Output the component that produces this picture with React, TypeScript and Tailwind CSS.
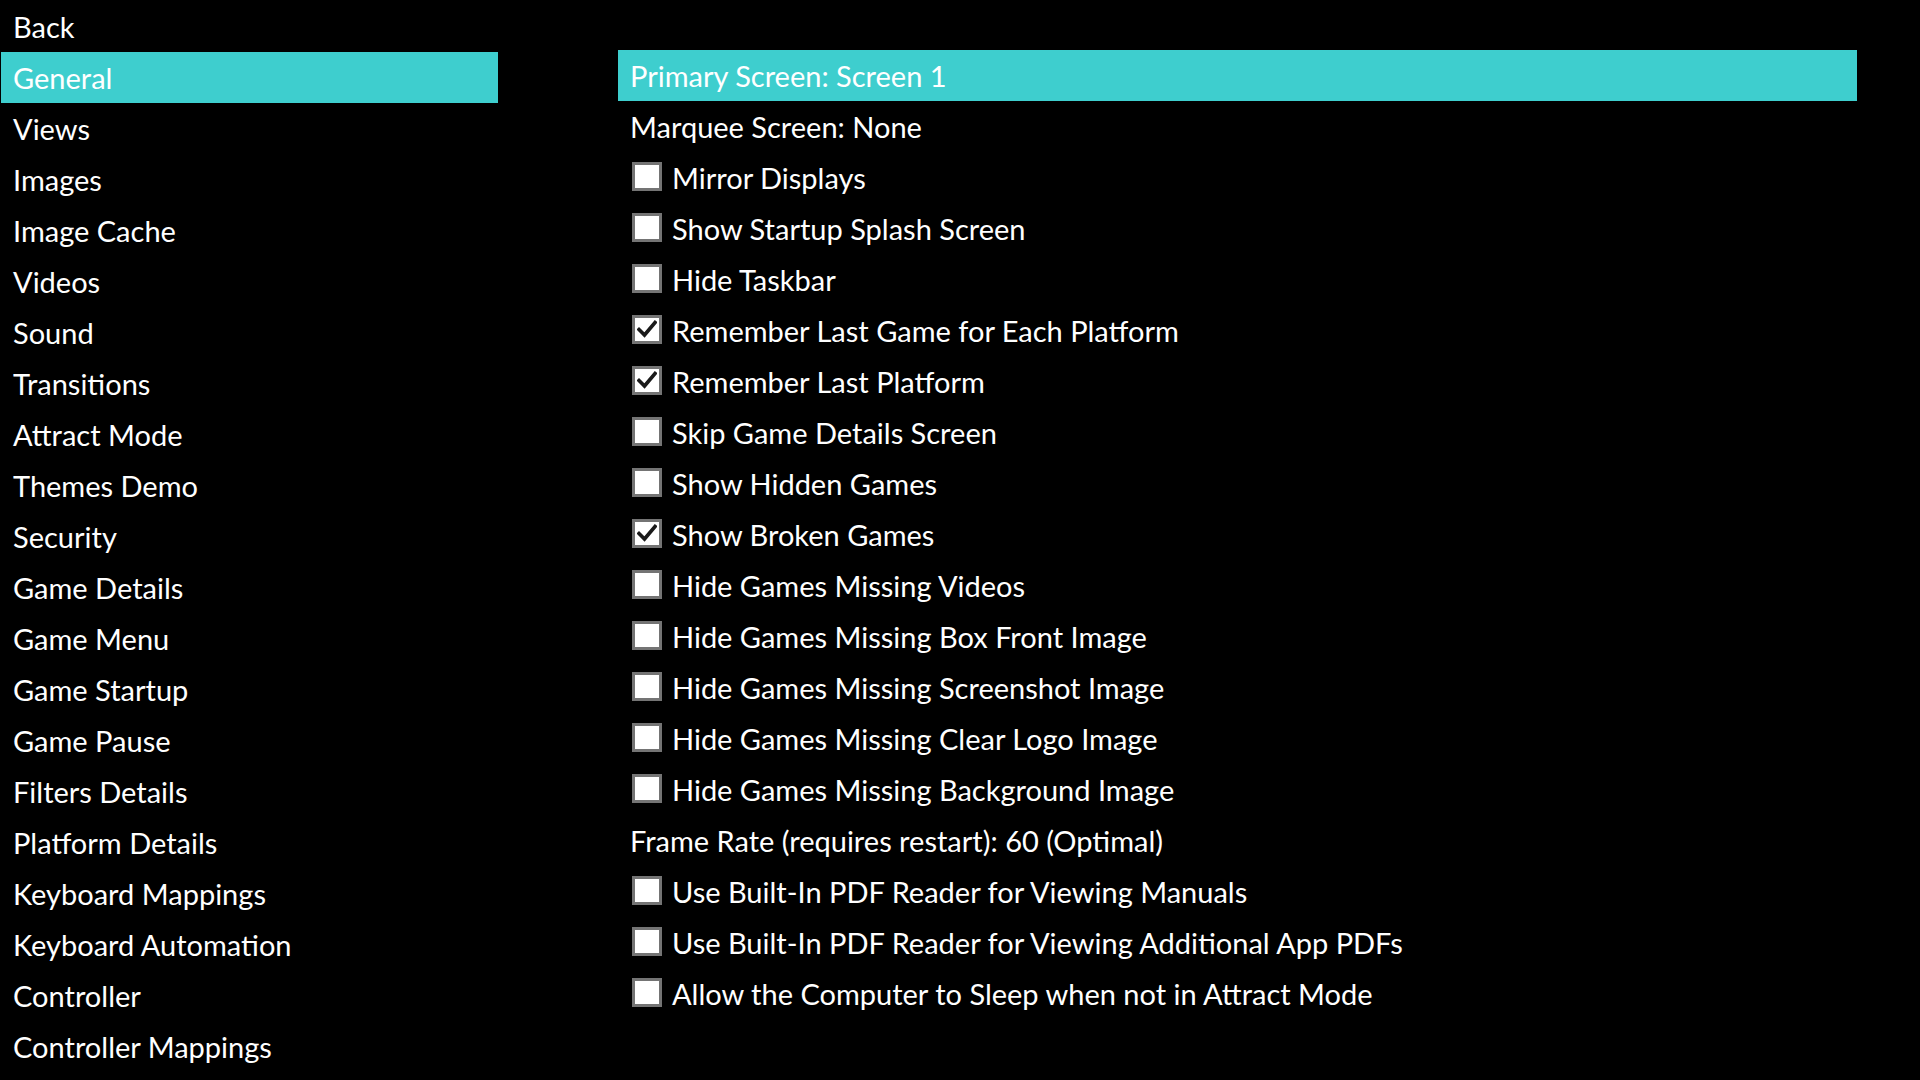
const navItems = [
  'Back',
  'General',
  'Views',
  'Images',
  'Image Cache',
  'Videos',
  'Sound',
  'Transitions',
  'Attract Mode',
  'Themes Demo',
  'Security',
  'Game Details',
  'Game Menu',
  'Game Startup',
  'Game Pause',
  'Filters Details',
  'Platform Details',
  'Keyboard Mappings',
  'Keyboard Automation',
  'Controller',
  'Controller Mappings',
];

type Setting = { label: string; checked?: boolean; kind: 'text' | 'check'; selected?: boolean };

const settings: Setting[] = [
  { label: 'Primary Screen: Screen 1', kind: 'text', selected: true },
  { label: 'Marquee Screen: None', kind: 'text' },
  { label: 'Mirror Displays', kind: 'check' },
  { label: 'Show Startup Splash Screen', kind: 'check' },
  { label: 'Hide Taskbar', kind: 'check' },
  { label: 'Remember Last Game for Each Platform', kind: 'check', checked: true },
  { label: 'Remember Last Platform', kind: 'check', checked: true },
  { label: 'Skip Game Details Screen', kind: 'check' },
  { label: 'Show Hidden Games', kind: 'check' },
  { label: 'Show Broken Games', kind: 'check', checked: true },
  { label: 'Hide Games Missing Videos', kind: 'check' },
  { label: 'Hide Games Missing Box Front Image', kind: 'check' },
  { label: 'Hide Games Missing Screenshot Image', kind: 'check' },
  { label: 'Hide Games Missing Clear Logo Image', kind: 'check' },
  { label: 'Hide Games Missing Background Image', kind: 'check' },
  { label: 'Frame Rate (requires restart): 60 (Optimal)', kind: 'text' },
  { label: 'Use Built-In PDF Reader for Viewing Manuals', kind: 'check' },
  { label: 'Use Built-In PDF Reader for Viewing Additional App PDFs', kind: 'check' },
  { label: 'Allow the Computer to Sleep when not in Attract Mode', kind: 'check' },
];

function CheckBox({ checked }: { checked?: boolean }) {
  return (
    <div className="w-[30px] h-[29px] mb-[3px] bg-white border-[3px] border-[#747474] flex items-center justify-center shrink-0">
      {checked && (
        <svg width="20" height="20" viewBox="0 0 20 20">
          <path d="M2 10.5 L7.5 16 L18 3.5" fill="none" stroke="#1a1a1a" strokeWidth="3.6" strokeLinecap="square" />
        </svg>
      )}
    </div>
  );
}

export default function App() {
  return (
    <div
      className="w-[1920px] h-[1080px] bg-black text-white flex overflow-hidden text-[29px]"
      style={{ fontFamily: 'Lato, "Open Sans", sans-serif' }}
    >
      {/* menu */}
      <div className="w-[497px] ml-[1px] pt-[1px] flex flex-col">
        {navItems.map((item) => (
          <div
            key={item}
            className={`h-[51px] flex items-center pl-[12px] ${item === 'General' ? 'bg-[#3ecece]' : ''}`}
          >
            {item}
          </div>
        ))}
      </div>

      {/* settings */}
      <div className="w-[1239px] ml-[120px] pt-[50px] flex flex-col">
        {settings.map((s) => (
          <div
            key={s.label}
            className={`h-[51px] flex items-center pl-[12px] ${s.selected ? 'bg-[#3ecece]' : ''}`}
          >
            {s.kind === 'check' ? (
              <div className="flex items-center gap-[10px] pl-[2px]">
                <CheckBox checked={s.checked} />
                <span>{s.label}</span>
              </div>
            ) : (
              <span>{s.label}</span>
            )}
          </div>
        ))}
      </div>
    </div>
  );
}
